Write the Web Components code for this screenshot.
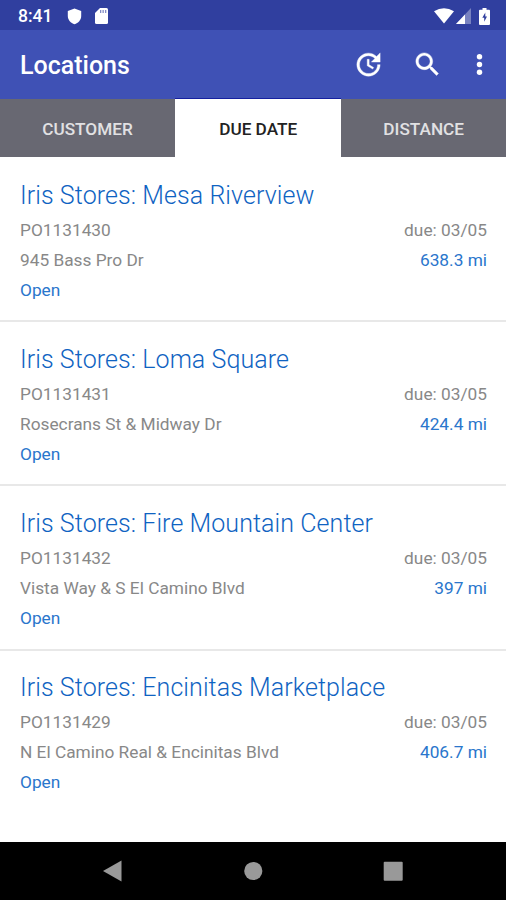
<!DOCTYPE html>
<html lang="en">
<head>
<meta charset="utf-8">
<title>Locations</title>
<style>
  body {
    margin: 0;
    font-family: Roboto, sans-serif;
    background: #fff;
  }
</style>
</head>
<body>
<locations-app></locations-app>

<script>
class StatusBar extends HTMLElement {
  connectedCallback() {
    this.attachShadow({ mode: "open" }).innerHTML = `
      <style>
        :host {
          display: flex;
          align-items: center;
          box-sizing: border-box;
          height: 30px;
          padding: 2px 16px 0 18px;
          background: #303f9f;
          color: #fff;
          font-size: 17.500px;
          font-weight: 500;
        }
        .time { width: 49px; line-height: 28px; }
        .space { flex: 1; }
        svg { display: block; fill: #fff; }
        .card { margin-left: 13px; }
        .signal { margin-left: 2px; }
        .battery { margin-left: 8px; }
      </style>
      <span class="time">8:41</span>
      <svg width="15" height="17" viewBox="0 0 15 17"><path d="M7.500.5 14.200 3v5c0 4-3 7.200-6.700 8.300C3.800 15.200.8 12 .8 8V3z"/></svg>
      <svg class="card" width="13" height="16" viewBox="0 0 13 16"><path d="M5 0h6.500Q13 0 13 1.500v13q0 1.500-1.500 1.500h-10Q0 16 0 14.500V5z"/><path d="M5 2h1.300v3H5zM7.500 2h1.300v3H7.500zM10 2h1.300v3H10z" fill="#303f9f" opacity=".6"/></svg>
      <span class="space"></span>
      <svg width="20" height="16" viewBox="0 0 20 16"><path d="M0 3.200Q10-2.600 20 3.200L10 15.500z"/></svg>
      <svg class="signal" width="15" height="16" viewBox="0 0 15 16"><path d="M15 0v16H0z" opacity=".35"/><path d="M9 6.400V16H0z"/></svg>
      <svg class="battery" width="11" height="17" viewBox="0 0 11 17"><path d="M3.500 0h4v1.700H10q1 0 1 1V16q0 1-1 1H1q-1 0-1-1V2.700q0-1 1-1h2.500z"/><path d="M6.300 4.500 3.300 9.800h1.900v4l2.800-5.200H6.300z" fill="#303f9f"/></svg>
    `;
  }
}

class AppBar extends HTMLElement {
  connectedCallback() {
    this.attachShadow({ mode: "open" }).innerHTML = `
      <style>
        :host {
          display: flex;
          align-items: center;
          box-sizing: border-box;
          height: 69px;
          padding: 0 11px 0 20px;
          background: #3f51b5;
          color: #fff;
        }
        .title {
          flex: 1;
          font-size: 25px;
          font-weight: 500;
          line-height: 30px;
          padding-top: 2px;
        }
        svg { display: block; fill: #fff; }
        .update { margin-top: -1px; }
        .search { margin: -1px 0 0 28px; }
        .more { margin-left: 21px; }
      </style>
      <span class="title"><slot></slot></span>
      <svg class="update" width="31" height="31" viewBox="0 0 24 24"><path d="M21 10.120h-6.780l2.740-2.820c-2.730-2.700-7.150-2.800-9.880-.1-2.730 2.710-2.730 7.080 0 9.790s7.150 2.710 9.880 0C18.320 15.650 19 14.080 19 12.100h2c0 1.980-.88 4.550-2.640 6.290-3.510 3.480-9.210 3.480-12.720 0-3.500-3.470-3.530-9.110-.02-12.580s9.140-3.470 12.650 0L21 3v7.120zM12.500 8v4.250l3.500 2.080-.72 1.210L11 13V8h1.500z" stroke="#fff" stroke-width=".3"/></svg>
      <svg class="search" width="31" height="31" viewBox="0 0 24 24"><path d="M15.500 14h-.79l-.28-.27C15.410 12.590 16 11.110 16 9.500 16 5.910 13.090 3 9.500 3S3 5.910 3 9.500 5.910 16 9.500 16c1.610 0 3.090-.59 4.230-1.570l.27.28v.79l5 4.990L20.490 19l-4.990-5zm-6 0C7.010 14 5 11.990 5 9.500S7.010 5 9.500 5 14 7.010 14 9.500 11.990 14 9.500 14z" stroke="#fff" stroke-width=".3"/></svg>
      <svg class="more" width="31" height="31" viewBox="0 0 24 24"><circle cx="12" cy="6" r="2.100"/><circle cx="12" cy="12" r="2.100"/><circle cx="12" cy="18" r="2.100"/></svg>
    `;
  }
}

class TabItem extends HTMLElement {
  connectedCallback() {
    this.attachShadow({ mode: "open" }).innerHTML = `
      <style>
        :host {
          display: flex;
          align-items: center;
          justify-content: center;
          box-sizing: border-box;
          padding-top: 2px;
          background: #686872;
          color: #e1e1e3;
          font-size: 17.200px;
          font-weight: 500;
        }
        :host([selected]) {
          background: #fff;
          color: #222;
          box-shadow: 0 -1px #1520a0;
        }
      </style>
      <slot></slot>
    `;
  }
}

class TabBar extends HTMLElement {
  connectedCallback() {
    this.attachShadow({ mode: "open" }).innerHTML = `
      <style>
        :host {
          display: grid;
          grid-template-columns: 175px 166.400px 1fr;
          height: 58px;
        }
      </style>
      <slot></slot>
    `;
  }
}

class LocationItem extends HTMLElement {
  connectedCallback() {
    const get = (name) => this.getAttribute(name);

    this.attachShadow({ mode: "open" }).innerHTML = `
      <style>
        :host {
          display: block;
          box-sizing: border-box;
          height: 164.200px;
          padding: 17.600px 19px 0 20px;
          border-bottom: 2px solid #e8e8e8;
          color: #888;
          font-size: 17.300px;
        }
        :host(:last-of-type) { border-bottom: none; }
        .name {
          height: 39px;
          line-height: 39px;
          font-size: 25px;
          font-weight: 300;
          letter-spacing: .08px;
          color: #0f63c2;
        }
        .row {
          display: flex;
          justify-content: space-between;
          line-height: 30px;
        }
        .link { color: #2a76cc; }
      </style>
      <div class="name"><slot></slot></div>
      <div class="row"><span>${get("order")}</span><span>due: ${get("due")}</span></div>
      <div class="row"><span>${get("address").replace("&", "&amp;")}</span><span class="link">${get("distance")}</span></div>
      <div class="row"><span class="link">Open</span></div>
    `;
  }
}

class NavBar extends HTMLElement {
  connectedCallback() {
    this.attachShadow({ mode: "open" }).innerHTML = `
      <style>
        :host {
          display: flex;
          align-items: center;
          justify-content: space-between;
          box-sizing: border-box;
          height: 58px;
          padding: 0 103px 0 102px;
          background: #000;
        }
        svg { display: block; fill: #999; }
      </style>
      <svg width="20" height="22" viewBox="0 0 20 22"><path d="M19.500.5v21L1 11z"/></svg>
      <svg width="20" height="20" viewBox="0 0 20 20"><circle cx="10.300" cy="10" r="9.100"/></svg>
      <svg width="20" height="20" viewBox="0 0 20 20"><rect x=".7" y=".8" width="19" height="19" rx="1"/></svg>
    `;
  }
}

class LocationsApp extends HTMLElement {
  connectedCallback() {
    this.attachShadow({ mode: "open" }).innerHTML = `
      <style>
        :host {
          display: flex;
          flex-direction: column;
          height: 900px;
          overflow: hidden;
        }
        main {
          flex: 1;
          min-height: 0;
          padding-top: 1px;
        }
      </style>
      <status-bar></status-bar>
      <app-bar>Locations</app-bar>
      <tab-bar>
        <tab-item>CUSTOMER</tab-item>
        <tab-item selected>DUE DATE</tab-item>
        <tab-item>DISTANCE</tab-item>
      </tab-bar>
      <main>
        <location-item order="PO1131430" due="03/05" address="945 Bass Pro Dr" distance="638.3 mi">Iris Stores: Mesa Riverview</location-item>
        <location-item order="PO1131431" due="03/05" address="Rosecrans St &amp; Midway Dr" distance="424.4 mi">Iris Stores: Loma Square</location-item>
        <location-item order="PO1131432" due="03/05" address="Vista Way &amp; S El Camino Blvd" distance="397 mi">Iris Stores: Fire Mountain Center</location-item>
        <location-item order="PO1131429" due="03/05" address="N El Camino Real &amp; Encinitas Blvd" distance="406.7 mi">Iris Stores: Encinitas Marketplace</location-item>
      </main>
      <nav-bar></nav-bar>
    `;
  }
}

customElements.define("status-bar", StatusBar);
customElements.define("app-bar", AppBar);
customElements.define("tab-item", TabItem);
customElements.define("tab-bar", TabBar);
customElements.define("location-item", LocationItem);
customElements.define("nav-bar", NavBar);
customElements.define("locations-app", LocationsApp);
</script>
</body>
</html>
